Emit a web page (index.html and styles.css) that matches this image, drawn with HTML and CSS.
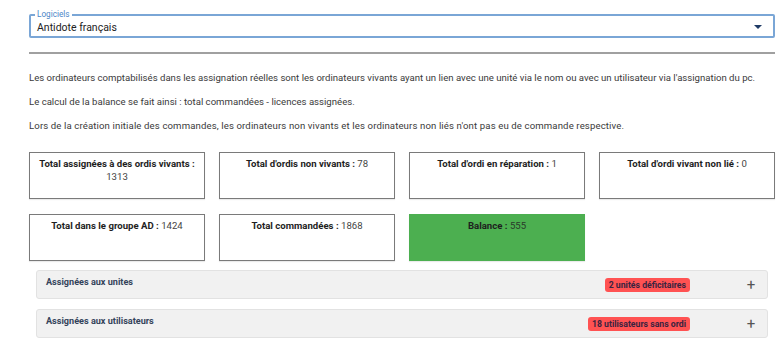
FILE: index.html
```html
<!DOCTYPE html>
<html lang="fr">
<head>
<meta charset="utf-8">
<link rel="stylesheet" href="styles.css">
</head>
<body>
<div class="page">
  <div class="select">
    <span class="select-label">Logiciels</span>
    <span class="select-value">Antidote français</span>
    <svg class="caret" width="8" height="4" viewBox="0 0 8 4"><path d="M0 0h8L4 4z" fill="#1f3b66"/></svg>
  </div>
  <div class="rule"></div>
  <div class="notes">
    <p>Les ordinateurs comptabilisés dans les assignation réelles sont les ordinateurs vivants ayant un lien avec une unité via le nom ou avec un utilisateur via l'assignation du pc.</p>
    <p>Le calcul de la balance se fait ainsi : total commandées - licences assignées.</p>
    <p class="wide">Lors de la création initiale des commandes, les ordinateurs non vivants et les ordinateurs non liés n'ont pas eu de commande respective.</p>
  </div>
  <div class="cards">
    <div class="card"><b>Total assignées à des ordis vivants :</b> <span class="val">1313</span></div>
    <div class="card"><b>Total d'ordis non vivants :</b> <span class="val">78</span></div>
    <div class="card"><b>Total d'ordi en réparation :</b> <span class="val">1</span></div>
    <div class="card"><b>Total d'ordi vivant non lié :</b> <span class="val">0</span></div>
    <div class="card"><b>Total dans le groupe AD :</b> <span class="val">1424</span></div>
    <div class="card"><b>Total commandées :</b> <span class="val">1868</span></div>
    <div class="card card-ok"><b>Balance :</b> <span class="val">555</span></div>
  </div>
  <div class="acc">
    <div class="acc-item">
      <span class="acc-title">Assignées aux unites</span>
      <span class="badge">2 unités déficitaires</span>
      <span class="plus">+</span>
    </div>
    <div class="acc-item">
      <span class="acc-title">Assignées aux utilisateurs</span>
      <span class="badge">18 utilisateurs sans ordi</span>
      <span class="plus">+</span>
    </div>
  </div>
</div>
</body>
</html>
```
FILE: styles.css
```css
* { box-sizing: border-box; }
html, body { margin: 0; padding: 0; background: #fff; }
body { font-family: Roboto, "Liberation Sans", sans-serif; color: #333; }
.page { padding: 14px 9px 0 29px; width: 784px; }
.select {
  position: relative;
  height: 24px;
  width: 746px;
  border: 2px solid #7aa6d6;
  border-radius: 2px;
  display: flex;
  align-items: center;
  padding-left: 6px;
}
.select-label {
  position: absolute;
  top: -6px;
  left: 4px;
  font-size: 8.2px;
  line-height: 9px;
  color: #4a86c8;
  background: #fff;
  padding: 0 2px;
}
.select-value { font-size: 10.5px; color: #222; padding-top: 2px; }
.caret { position: absolute; right: 11px; top: 9px; }
.rule { width: 746px; height: 2px; background: #a0a0a0; margin-top: 14px; }
.notes { padding-top: 6px; }
.notes p { margin: 10.5px 0 11px; font-size: 9.6px; line-height: 13px; color: #3a3a3a; white-space: nowrap; }
.notes p.wide { letter-spacing: 0.12px; }
.cards {
  display: grid;
  grid-template-columns: repeat(4, 176px);
  grid-auto-rows: 47px;
  column-gap: 14px;
  row-gap: 15px;
  margin-top: 20px;
}
.card {
  border: 1px solid #7a7a7a;
  text-align: center;
  font-size: 9.6px;
  line-height: 13px;
  padding: 4px 8px 0;
  color: #222;
  box-shadow: 0 1px 1px rgba(0,0,0,0.08);
}
.card b { font-weight: 700; color: #1e1e1e; }
.val { color: #444; }
.card-ok { background: #4caf50; border-color: #4caf50; }
.card-ok .val { color: #2a3a2a; }
.acc { margin: 9px 0 0 7px; width: 732px; display: flex; flex-direction: column; gap: 10px; }
.acc-item {
  height: 29px;
  background: #f1f1f1;
  border: 1px solid #e2e2e2;
  border-radius: 3px;
  display: flex;
  align-items: center;
  padding: 0 10px 0 9px;
}
.acc-title { font-size: 9.1px; font-weight: 700; color: #34435a; flex: 1; margin-top: -5px; }
.badge {
  background: #ff5252;
  color: #3a2340;
  font-size: 8.7px;
  font-weight: 700;
  padding: 1px 4px;
  border-radius: 3px;
  line-height: 12px;
  margin-top: 1px;
}
.plus { margin-left: 55px; font-size: 15px; color: #555; line-height: 14px; width: 12px; text-align: center; margin-top: 2px; }
```
